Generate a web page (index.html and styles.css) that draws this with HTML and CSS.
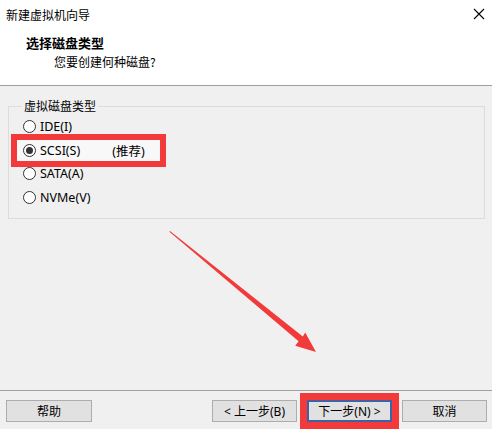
FILE: index.html
```html
<!DOCTYPE html>
<html lang="zh-CN">
<head>
    <meta charset="utf-8" />
    <title>新建虚拟机向导</title>
    <link rel="stylesheet" href="styles.css">
</head>
<body>
    <div class="window">
        <div class="titlebar">
            <span class="title">新建虚拟机向导</span>
            <svg class="close" width="12" height="12" viewBox="0 0 12 12">
                <path d="M1 1 L11 11 M11 1 L1 11" stroke="#000" stroke-width="1.1" fill="none" />
            </svg>
        </div>

        <div class="header">
            <div class="header-title">选择磁盘类型</div>
            <div class="header-sub">您要创建何种磁盘?</div>
        </div>

        <div class="content">
            <fieldset class="group">
                <legend>虚拟磁盘类型</legend>
                <div class="option">
                    <span class="radio"></span>
                    <span>IDE(I)</span>
                </div>
                <div class="option marked">
                    <span class="radio checked"></span>
                    <span>SCSI(S)</span>
                    <span class="hint">(推荐)</span>
                </div>
                <div class="option">
                    <span class="radio"></span>
                    <span>SATA(A)</span>
                </div>
                <div class="option">
                    <span class="radio"></span>
                    <span>NVMe(V)</span>
                </div>
            </fieldset>
        </div>

        <div class="footer">
            <button class="btn">帮助</button>
            <div class="spacer"></div>
            <button class="btn">&lt; 上一步(B)</button>
            <button class="btn default marked-btn">下一步(N) &gt;</button>
            <button class="btn">取消</button>
        </div>

        <!-- annotation arrow -->
        <svg class="arrow" width="492" height="429" viewBox="0 0 492 429">
            <polygon fill="#f23a3a"
                points="170,231 302.8,336.6 305.2,332.6 316,352 295.2,345.8 298.6,341.2 169.4,231.8" />
        </svg>
    </div>
</body>
</html>
```

FILE: styles.css
```css
html, body {
    margin: 0;
    padding: 0;
    background: #f0f0f0;
}

body {
    font-family: "Noto Sans", "Noto Sans CJK SC", sans-serif;
    font-size: 12px;
    color: #000;
}

.window {
    position: relative;
    width: 492px;
    height: 429px;
    overflow: hidden;
    display: flex;
    flex-direction: column;
}

.titlebar {
    height: 30px;
    background: #fff;
    display: flex;
    align-items: center;
    justify-content: space-between;
    padding: 0 6px 0 6px;
    box-sizing: border-box;
}

.title {
    font-family: "Noto Sans CJK SC", sans-serif;
    font-size: 12px;
    margin-top: -2px;
}

.close {
    margin-right: 1px;
    margin-top: -2px;
}

.header {
    height: 56px;
    background: #fff;
    border-bottom: 1px solid #a0a0a0;
    box-sizing: border-box;
    padding-top: 3px;
}

.header-title {
    font-family: "Noto Sans CJK SC", sans-serif;
    font-weight: bold;
    font-size: 13px;
    line-height: 19px;
    padding-left: 26px;
}

.header-sub {
    font-family: "Noto Sans CJK SC", sans-serif;
    line-height: 19px;
    padding-left: 54px;
}

.content {
    flex: 1;
    padding: 12px 8px 0 8px;
}

.group {
    margin: 0;
    padding: 1px 0 9px 7px;
    border: 1px solid #dcdcdc;
    min-width: 0;
    width: 477px;
    box-sizing: border-box;
}

.group legend {
    font-family: "Noto Sans CJK SC", sans-serif;
    padding: 0 2px;
    margin-left: 6px;
    line-height: 16px;
}

.option {
    display: flex;
    align-items: center;
    height: 23.5px;
    width: 145px;
    padding-left: 7px;
    box-sizing: border-box;
    font-size: 12.5px;
}

.option.marked {
    background: #f8f8f8;
    outline: 6px solid #f23a3a;
    outline-offset: -1px;
}

.radio {
    width: 11px;
    height: 11px;
    border: 1px solid #333;
    border-radius: 50%;
    background: #fff;
    margin-right: 4px;
    display: flex;
    align-items: center;
    justify-content: center;
}

.radio.checked::after {
    content: "";
    width: 7px;
    height: 7px;
    border-radius: 50%;
    background: #333;
}

.hint {
    margin-left: 32px;
}

.footer {
    height: 39px;
    border-top: 1px solid #a0a0a0;
    display: flex;
    align-items: flex-start;
    padding: 9px 5px 0 6px;
    box-sizing: border-box;
}

.spacer {
    flex: 1;
}

.btn {
    width: 85px;
    height: 22px;
    margin-left: 10px;
    border: 1px solid #adadad;
    background: #e1e1e1;
    font-family: "Noto Sans", "Noto Sans CJK SC", sans-serif;
    font-size: 12px;
    color: #000;
    padding: 0;
}

.btn:first-child {
    margin-left: 0;
    width: 86px;
}

.btn.default {
    border: 2px solid #3c63a8;
}

.btn.marked-btn {
    outline: 7px solid #f23a3a;
    outline-offset: 0;
}

.arrow {
    position: absolute;
    left: 0;
    top: 0;
    pointer-events: none;
}
```
